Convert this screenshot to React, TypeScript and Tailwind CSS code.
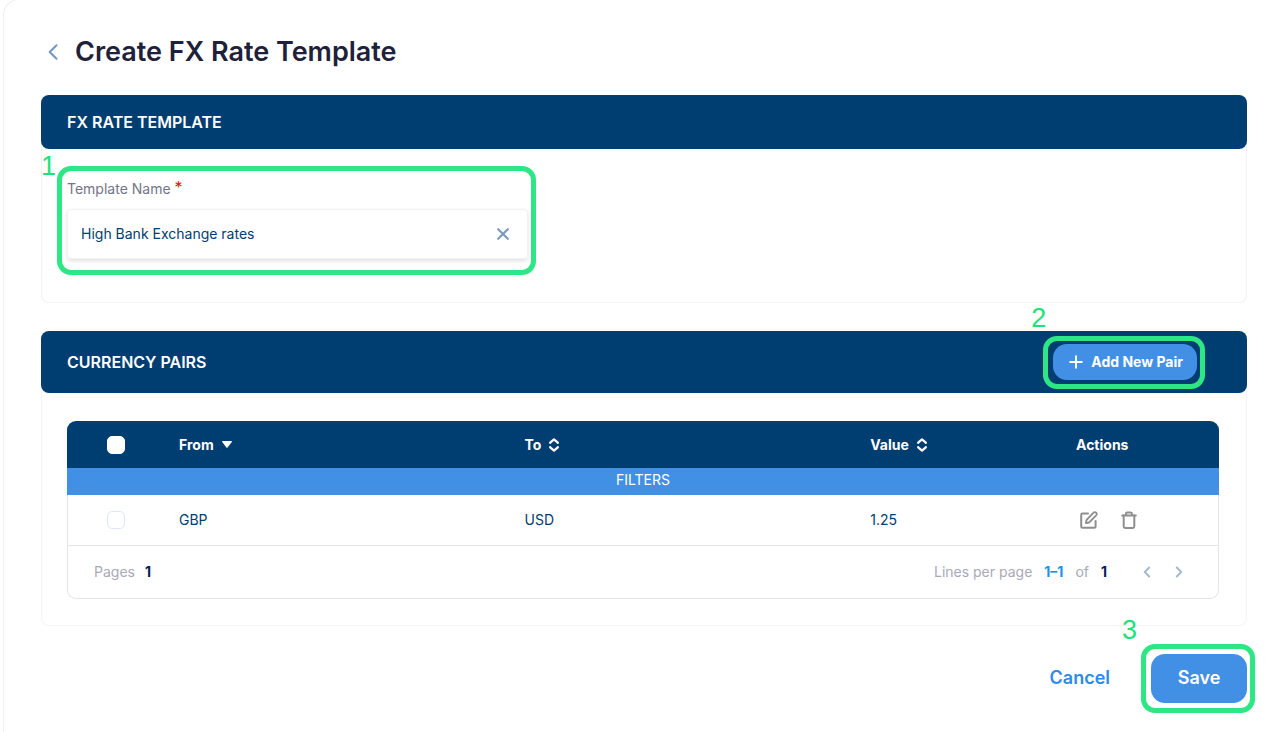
import React from 'react';

type CalloutProps = { label: string; frame: string; digit: string };

function Callout({ label, frame, digit }: CalloutProps) {
  return (
    <>
      <span
        aria-hidden="true"
        className={`pointer-events-none absolute rounded-[14px] border-5 border-[#2ce783] ${frame}`}
      />
      <span
        className={`pointer-events-none absolute font-['Liberation_Sans',sans-serif] text-[27px] leading-none font-normal text-[#1be37b] ${digit}`}
      >
        {label}
      </span>
    </>
  );
}

function SortIcon() {
  return (
    <svg width="10" height="14" viewBox="0 0 10 14" fill="none" stroke="currentColor" strokeWidth="2.2" strokeLinecap="round" strokeLinejoin="round" aria-hidden="true">
      <path d="M1.2 5V4.6L5 1.4L8.8 4.6V5" />
      <path d="M1.2 9V9.4L5 12.6L8.8 9.4V9" />
    </svg>
  );
}

function SortedIcon() {
  return (
    <svg width="10" height="7" viewBox="0 0 10 7" fill="currentColor" aria-hidden="true">
      <path d="M.7 0H9.3C9.9 0 10.2.7 9.8 1.1L5.6 6.5C5.3 6.9 4.7 6.9 4.4 6.5L.2 1.1C-.2.7.1 0 .7 0Z" />
    </svg>
  );
}

function EditIcon() {
  return (
    <svg width="18" height="18" viewBox="0 0 18 18" fill="none" stroke="currentColor" strokeWidth="2" strokeLinecap="round" strokeLinejoin="round" aria-hidden="true">
      <path d="M8 2.5H2.6C1.7 2.5 1.2 3 1.2 3.9V15.4C1.2 16.3 1.7 16.8 2.6 16.8H14.2C15.1 16.8 15.6 16.3 15.6 15.4V10" />
      <path strokeWidth="1.8" d="M5.9 12.1L6.5 9L13.6 1.7C14.3 1 15.4 1 16.2 1.7C17 2.5 17 3.6 16.2 4.3L9.1 11.5L5.9 12.1Z" />
    </svg>
  );
}

function TrashIcon() {
  return (
    <svg width="16" height="18" viewBox="0 0 16 18" fill="none" stroke="currentColor" strokeWidth="2" strokeLinecap="round" strokeLinejoin="round" aria-hidden="true">
      <path d="M1.2 4.5H14.8" />
      <path d="M2.7 4.5V15.5C2.7 16.4 3.2 16.9 4.1 16.9H11.9C12.8 16.9 13.3 16.4 13.3 15.5V4.5" />
      <path d="M5 4V2.9C5 1.9 5.5 1.4 6.4 1.4H9.6C10.5 1.4 11 1.9 11 2.9V4" />
    </svg>
  );
}

function Chevron({ d, size }: { d: string; size: 'small' | 'large' }) {
  return (
    <svg
      className={size === 'large' ? 'h-4 w-[10px]' : 'h-3 w-2'}
      viewBox={size === 'large' ? '0 0 10 16' : '0 0 8 12'}
      fill="none"
      stroke="currentColor"
      strokeWidth="2"
      strokeLinecap="round"
      strokeLinejoin="round"
      aria-hidden="true"
    >
      <path d={d} />
    </svg>
  );
}

const checkbox = 'block size-[18px] mx-auto appearance-none rounded-[5px] border bg-white checked:bg-[#4290e6]';
const rows = [{ from: 'GBP', to: 'USD', value: '1.25' }];

export default function App() {
  return (
    <main className="-mt-px ml-[3px] min-h-screen rounded-tl-2xl border-t border-l border-[#f0f0f2] bg-white pr-[33px] pb-[30px] pl-[37px] font-['Inter','Noto_Sans',sans-serif] text-sm text-[#003d70]">
      <header className="flex h-[95px] items-center gap-[17px] pt-2 pl-[7px]">
        <button type="button" aria-label="Back" className="text-[#7398bf]">
          <Chevron size="large" d="M8.5 1.2L1.7 8L8.5 14.8" />
        </button>
        <h1 className="text-[27px] leading-9 font-semibold text-[#1e2139]">Create FX Rate Template</h1>
      </header>

      <section className="rounded-lg shadow-[inset_0_0_0_1px_#f3f3f5]">
        <h2 className="flex h-[54px] items-center rounded-lg bg-[#003d70] px-[26px] text-base font-semibold text-white">
          FX RATE TEMPLATE
        </h2>
        <div className="px-[26px] pt-7 pb-11">
          <div className="relative max-w-[461px]">
            <label htmlFor="template-name" className="mb-2 flex h-6 items-center gap-1 text-[#73748a]">
              Template Name
              <span className="self-start text-base leading-5 text-[#e31212]">*</span>
            </label>
            <div className="flex h-[50px] items-center rounded border border-[#f2f2f4] pr-[18px] pl-[13px] shadow-[0_2px_4px_rgba(0,0,0,0.12)]">
              <input
                id="template-name"
                type="text"
                required
                defaultValue="High Bank Exchange rates"
                className="min-w-0 flex-1 bg-transparent text-sm text-[#003d70] outline-none"
              />
              <button type="button" aria-label="Clear" className="text-[#7d9abd]">
                <svg width="12" height="12" viewBox="0 0 12 12" stroke="currentColor" strokeWidth="2.2" strokeLinecap="round" aria-hidden="true">
                  <path d="M1.2 1.2L10.8 10.8M10.8 1.2L1.2 10.8" />
                </svg>
              </button>
            </div>
            <Callout label="1" frame="-top-[11px] -right-2 -bottom-4 -left-[10px]" digit="-top-6 -left-[26px]" />
          </div>
        </div>
      </section>

      <section className="mt-7 rounded-lg shadow-[inset_0_0_0_1px_#f3f3f5]">
        <div className="flex h-[62px] items-center justify-between rounded-lg bg-[#003d70] pr-[50px] pl-[26px] text-white">
          <h2 className="text-base font-semibold">CURRENCY PAIRS</h2>
          <div className="relative">
            <button type="button" className="flex h-9 items-center gap-2 rounded-[14px] bg-[#4290e6] pr-[14px] pl-4 font-bold">
              <svg width="14" height="14" viewBox="0 0 14 14" stroke="currentColor" strokeWidth="2" strokeLinecap="round" aria-hidden="true">
                <path d="M7 1.2V12.8M1.2 7H12.8" />
              </svg>
              Add New Pair
            </button>
            <Callout label="2" frame="-top-2 -right-2 -bottom-[9px] -left-[10px]" digit="-top-[39px] -left-[22px]" />
          </div>
        </div>

        <div className="pt-7 pr-7 pb-[27px] pl-[26px]">
          <div className="overflow-hidden rounded-[9px] shadow-[inset_0_0_0_1px_#e3e4e8]">
            <table className="w-full table-fixed text-left">
              <colgroup>
                <col className="w-[98px]" />
                <col className="w-[30%]" />
                <col className="w-[30%]" />
                <col />
                <col className="w-[157px]" />
              </colgroup>
              <thead className="bg-[#003d70] text-white">
                <tr className="h-[47px]">
                  <th>
                    <input type="checkbox" aria-label="Select all" className={`${checkbox} border-white`} />
                  </th>
                  <th className="pl-[14px] font-bold" aria-sort="descending">
                    <button type="button" className="flex items-center gap-2">From <SortedIcon /></button>
                  </th>
                  <th className="pl-[14px] font-bold">
                    <button type="button" className="flex items-center gap-2">To <SortIcon /></button>
                  </th>
                  <th className="pl-[14px] font-bold">
                    <button type="button" className="flex items-center gap-2">Value <SortIcon /></button>
                  </th>
                  <th className="pl-[14px] font-bold">Actions</th>
                </tr>
                <tr className="h-[27px] bg-[#4290e6]">
                  <th colSpan={5} className="text-center font-normal">
                    <button type="button" className="block w-full pb-1">FILTERS</button>
                  </th>
                </tr>
              </thead>
              <tbody>
                {rows.map((row) => (
                  <tr key={row.from + row.to} className="h-[50px] border-b border-[#e3e4e8]">
                    <td>
                      <input type="checkbox" aria-label={`Select ${row.from} to ${row.to}`} className={`${checkbox} border-[#dfe5fb]`} />
                    </td>
                    <td className="pl-[14px]">{row.from}</td>
                    <td className="pl-[14px]">{row.to}</td>
                    <td className="pl-[14px]">{row.value}</td>
                    <td className="pl-[18px]">
                      <div className="flex items-center gap-[23px] text-[#8e8e8e]">
                        <button type="button" aria-label="Edit"><EditIcon /></button>
                        <button type="button" aria-label="Delete"><TrashIcon /></button>
                      </div>
                    </td>
                  </tr>
                ))}
              </tbody>
            </table>
            <footer className="flex h-[53px] items-center justify-between pr-9 pl-[27px] text-[#a9a9b8]">
              <p className="flex gap-[10px]">
                Pages <b className="font-bold text-[#00205b]">1</b>
              </p>
              <div className="flex items-center gap-3">
                <span>Lines per page</span>
                <b className="font-bold text-[#1296f5]">1–1</b>
                <span>of</span>
                <b className="font-bold text-[#00205b]">1</b>
                <span className="flex gap-6 pl-6 text-[#a5bbd1]">
                  <button type="button" aria-label="Previous page"><Chevron size="small" d="M6.2 1.5L1.8 6L6.2 10.5" /></button>
                  <button type="button" aria-label="Next page"><Chevron size="small" d="M1.8 1.5L6.2 6L1.8 10.5" /></button>
                </span>
              </div>
            </footer>
          </div>
        </div>
      </section>

      <div className="mt-7 flex items-center justify-end gap-[41px] text-lg font-semibold">
        <button type="button" className="text-[#2f89e8]">Cancel</button>
        <div className="relative">
          <button type="button" className="block h-[49px] w-24 rounded-[14px] bg-[#4290e6] text-white">Save</button>
          <Callout label="3" frame="-top-[10px] -right-2 -bottom-[10px] -left-[10px]" digit="-top-[37px] -left-[29px]" />
        </div>
      </div>
    </main>
  );
}
